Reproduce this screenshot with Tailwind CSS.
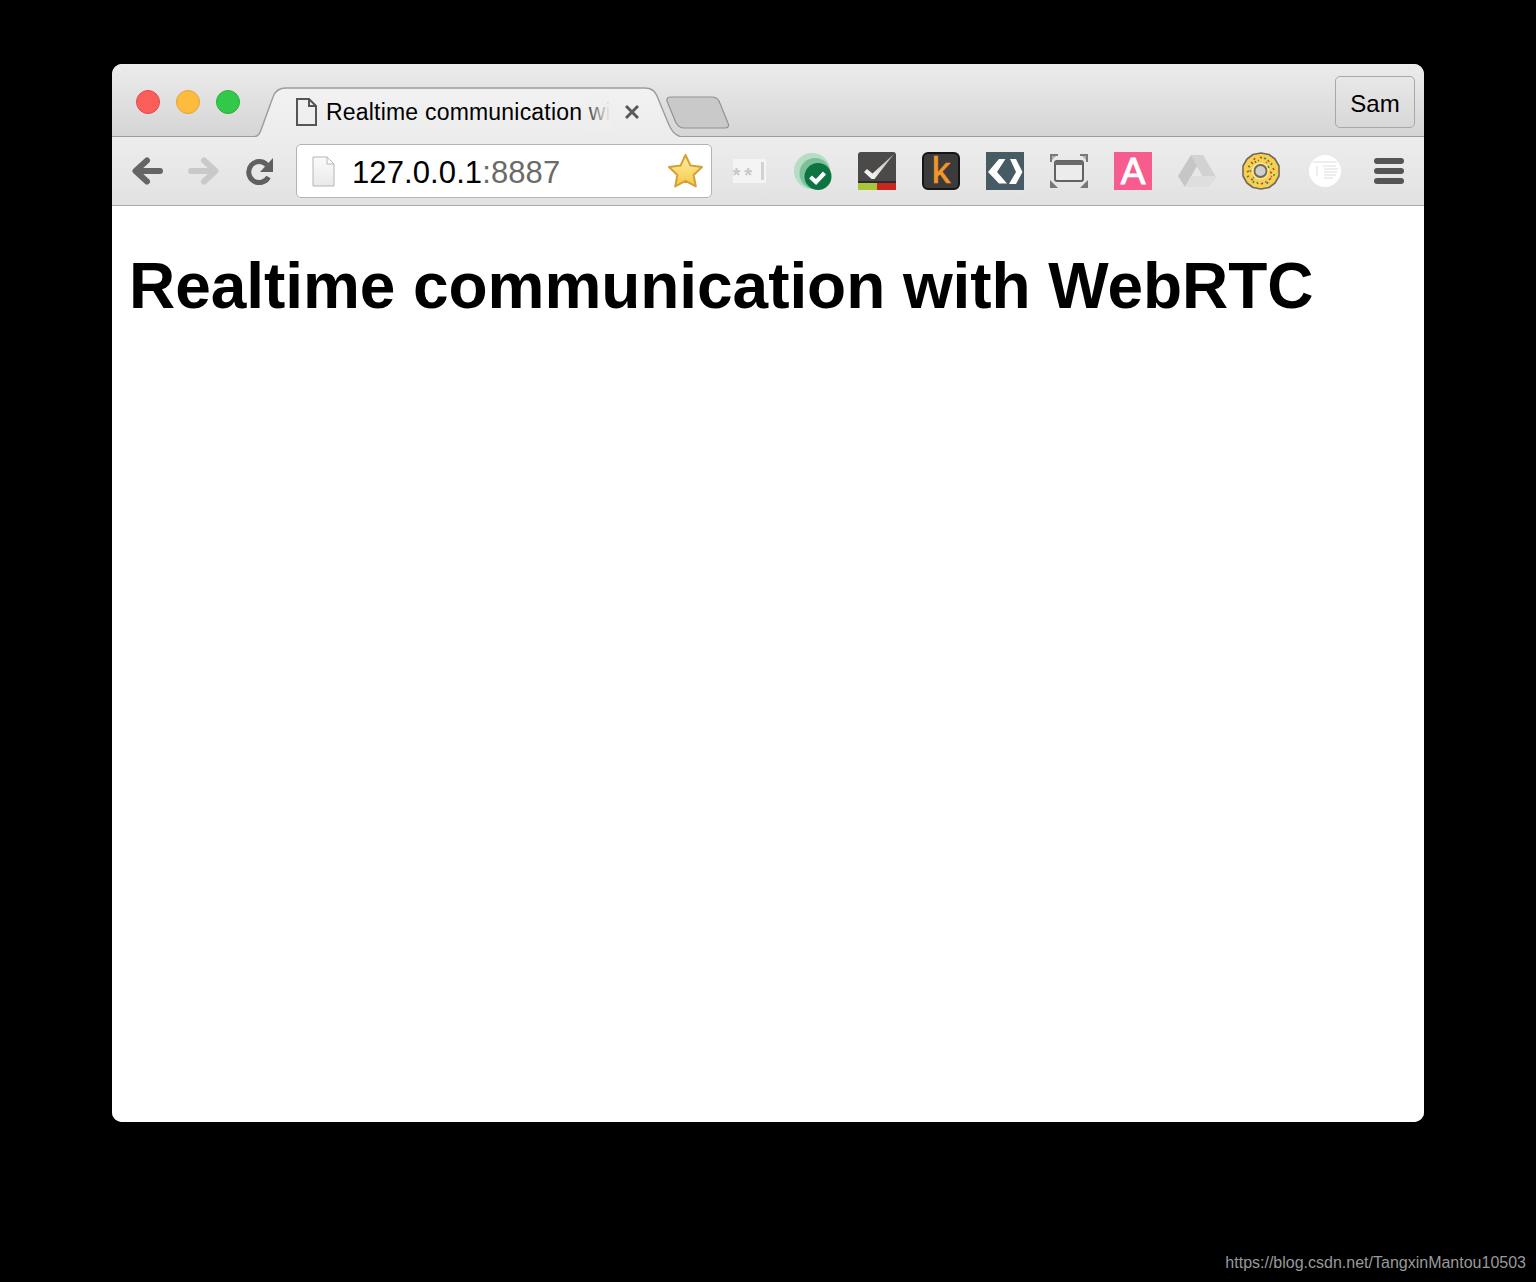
<!DOCTYPE html>
<html lang="en">
<head>
    <meta charset="UTF-8">
    <title>Realtime communication with WebRTC</title>
    <script src="https://cdn.jsdelivr.net/npm/@tailwindcss/browser@4"></script>
</head>
<body class="bg-black h-[1282px] overflow-hidden font-['Liberation_Sans',sans-serif]">
    <div class="pt-[64px] pl-[112px] h-[1251px]">
        <div class="w-[1312px] h-[1058px] bg-white rounded-[10px] overflow-hidden flex flex-col">

            <!-- Tab strip -->
            <div class="h-[73px] shrink-0 flex items-start border-b border-[#9c9c9c] bg-linear-to-b from-[#ececec] to-[#d5d5d5]">
                <div class="flex gap-[16px] pl-[24px] pt-[26px]">
                    <span class="w-[24px] h-[24px] rounded-full bg-[#fc5f5a] border border-[#e5484a]"></span>
                    <span class="w-[24px] h-[24px] rounded-full bg-[#fdbc3e] border border-[#e3a52f]"></span>
                    <span class="w-[24px] h-[24px] rounded-full bg-[#33c948] border border-[#2cae3d]"></span>
                </div>
                <div class="relative w-[425px] h-[50px] ml-[15px] mt-[23px] shrink-0">
                    <svg class="absolute inset-0" width="425" height="50" viewBox="0 0 425 50">
                        <defs>
                            <linearGradient id="tabFill" x1="0" y1="0" x2="0" y2="1">
                                <stop offset="0" stop-color="#f2f2f2"/>
                                <stop offset="1" stop-color="#ececec"/>
                            </linearGradient>
                        </defs>
                        <path d="M0 50 C4 49 5 46 6 43 L18 10 C20 4 24 1 31 1 L390 1 C396 1 400 4 402 9 L414 38 C417 45 420 48 425 49 L425 50 Z" fill="url(#tabFill)"/>
                        <path d="M0 49.5 C4 49 5 46 6 43 L18 10 C20 4 24 1 31 1 L390 1 C396 1 400 4 402 9 L414 38 C417 45 420 48 425 49.5" fill="none" stroke="#9c9c9c" stroke-width="1.4"/>
                    </svg>
                    <div class="relative flex items-center h-full pl-[41px]">
                        <svg class="shrink-0" width="21" height="28" viewBox="0 0 21 28" fill="none" stroke="#555" stroke-width="2">
                            <path d="M1 1 H13 L20 8 V27 H1 Z M13 1 V8 H20"/>
                        </svg>
                        <div class="relative w-[284px] ml-[9px] whitespace-nowrap text-[23px] tracking-[0.2px] text-black">
                            Realtime communication wi
                            <span class="absolute inset-y-0 right-0 w-[30px] bg-linear-to-r from-[#efefef]/0 to-[#efefef]"></span>
                        </div>
                        <svg class="shrink-0 ml-[15px]" width="14" height="14" viewBox="0 0 14 14" stroke="#5a5a5a" stroke-width="3">
                            <path d="M1 1 L13 13 M13 1 L1 13"/>
                        </svg>
                    </div>
                </div>
                <svg class="relative shrink-0 -ml-[14px] mt-[32px]" width="64" height="33" viewBox="0 0 64 33">
                    <path d="M1 5 C0.5 2 2 1 5 1 L46 1 C50 1 52 3 53 5 L62 27 C63.5 30 62 32 59 32 L18 32 C14 32 12 30 10 27 Z" fill="#c9c9c9" stroke="#929292" stroke-width="1.2"/>
                </svg>
                <div class="ml-auto mr-[9px] mt-[12px] w-[80px] h-[52px] pt-[4px] rounded-[5px] border border-[#a8a8a8] flex items-center justify-center text-[24px] text-black">Sam</div>
            </div>

            <!-- Toolbar -->
            <div class="h-[69px] shrink-0 flex items-center border-b border-[#a8a8a8] bg-linear-to-b from-[#ededed] to-[#e2e2e2]">
                <svg class="ml-[20px] shrink-0" width="32" height="28" viewBox="0 0 32 28" fill="none" stroke="#656565" stroke-width="6" stroke-linecap="round" stroke-linejoin="round">
                    <path d="M28 14 H4 M15 3.500 L3.500 14 L15 24.500"/>
                </svg>
                <svg class="ml-[23px] shrink-0" width="32" height="28" viewBox="0 0 32 28" fill="none" stroke="#c9c9c9" stroke-width="6" stroke-linecap="round" stroke-linejoin="round">
                    <path d="M4 14 H28 M17 3.500 L28.500 14 L17 24.500"/>
                </svg>
                <svg class="ml-[27px] shrink-0" width="28" height="28" viewBox="0 0 28 28" fill="none">
                    <path d="M22.500 20 A10.500 10.500 0 1 1 21 8" stroke="#606060" stroke-width="5"/>
                    <path d="M27 1 V15 H14 Z" fill="#606060"/>
                </svg>
                <div class="ml-[22px] w-[416px] h-[54px] shrink-0 bg-white rounded-[5px] border border-[#b4b4b4] flex items-center pl-[15px]">
                    <svg class="shrink-0" width="23" height="31" viewBox="0 0 23 31">
                        <defs>
                            <linearGradient id="pageFill" x1="0" y1="0" x2="0" y2="1">
                                <stop offset="0" stop-color="#fbfbfb"/>
                                <stop offset="1" stop-color="#e9e9e9"/>
                            </linearGradient>
                        </defs>
                        <path d="M1 1 H15 L22 8 V30 H1 Z" fill="url(#pageFill)" stroke="#b5b5b5" stroke-width="1"/>
                        <path d="M15 1 V8 H22 Z" fill="#fff" stroke="#b5b5b5" stroke-width="1"/>
                    </svg>
                    <div class="ml-[17px] pt-[4px] text-[31px] tracking-[0.1px] text-black">127.0.0.1<span class="text-[#6a6a6a]">:8887</span></div>
                    <svg class="ml-auto mr-[7px] shrink-0" width="37" height="36" viewBox="0 0 37 36">
                        <defs>
                            <linearGradient id="starFill" x1="0" y1="0" x2="0" y2="1">
                                <stop offset="0" stop-color="#fdf0a4"/>
                                <stop offset="1" stop-color="#f8c845"/>
                            </linearGradient>
                        </defs>
                        <path d="M18.500 2 L23.500 12.600 L35 14 L26.600 22 L28.800 33.500 L18.500 27.800 L8.200 33.500 L10.400 22 L2 14 L13.500 12.600 Z" fill="url(#starFill)" stroke="#d69f38" stroke-width="2" stroke-linejoin="round"/>
                    </svg>
                </div>

                <div class="ml-[18px] flex items-center gap-[26px]">
                    <!-- password ext -->
                    <div class="w-[38px] h-[38px] flex items-center justify-center">
                        <div class="relative w-[33px] h-[24px] bg-[#f4f4f4]">
                            <span class="absolute left-0 top-[6px] text-[#c8c8c8] text-[20px] leading-[20px] tracking-[4px] font-bold whitespace-nowrap">**</span>
                            <span class="absolute right-[2px] top-[3px] w-[3px] h-[18px] bg-[#d2d2d2]"></span>
                        </div>
                    </div>
                    <!-- green check -->
                    <svg width="38" height="38" viewBox="0 0 38 38">
                        <circle cx="18" cy="19" r="18" fill="#b5dcc5"/>
                        <circle cx="21" cy="21.500" r="15.500" fill="#7cc09a"/>
                        <circle cx="24" cy="24.500" r="13.500" fill="#0c7440"/>
                        <path d="M16.500 25 L22 30 L30.500 21" fill="none" stroke="#fff" stroke-width="4.200"/>
                    </svg>
                    <!-- checkmark tile -->
                    <svg width="38" height="38" viewBox="0 0 38 38">
                        <defs>
                            <linearGradient id="checkFill" x1="0" y1="1" x2="1" y2="0">
                                <stop offset="0" stop-color="#ffffff"/>
                                <stop offset="1" stop-color="#b5b5b5"/>
                            </linearGradient>
                        </defs>
                        <rect width="38" height="38" rx="3" fill="#4c4a49"/>
                        <rect y="29" width="38" height="2" fill="#2e2a33"/>
                        <rect y="31" width="19" height="7" fill="#a8c63a"/>
                        <rect x="19" y="31" width="19" height="7" fill="#c8261f"/>
                        <path d="M6 20 L9 17 L14.500 21.500 L36 2 L16.500 27 L13.500 27 Z" fill="url(#checkFill)"/>
                    </svg>
                    <!-- k tile -->
                    <div class="w-[38px] h-[38px] rounded-[6px] bg-[#3b3b3b] border-2 border-[#161616] flex items-center justify-center text-[#f0962a] text-[37px] leading-none pb-[2px] [-webkit-text-stroke:0.7px_#f0962a]">k</div>
                    <!-- diamond tile -->
                    <svg width="38" height="38" viewBox="0 0 38 38">
                        <rect width="38" height="38" fill="#475b65"/>
                        <path d="M13 7 H19.500 L11 20 L21 31.500 H13 L2 20 Z M24 7 H30 L36.500 20 L30 32 H23 L30 20 Z" fill="#fff"/>
                    </svg>
                    <!-- screenshot frame -->
                    <svg width="38" height="38" viewBox="0 0 38 38">
                        <path d="M0 2 H8 L0 10 Z M38 2 H30 L38 10 Z" fill="#b0b0b0"/>
                        <path d="M0 2 H8 V4 H2 V10 H0 Z M38 2 H30 V4 H36 V10 H38 Z" fill="#7a7a7a"/>
                        <path d="M0 36 H8 L0 28 Z M38 36 H30 L38 28 Z" fill="#777"/>
                        <rect x="5" y="9" width="28" height="20" rx="2" fill="#ececec" stroke="#626262" stroke-width="2"/>
                        <rect x="5" y="9" width="28" height="4" fill="#6a6a6a"/>
                    </svg>
                    <!-- pink A -->
                    <div class="w-[38px] h-[38px] bg-[#f75c8f] flex items-center justify-center text-white text-[37px] leading-none [-webkit-text-stroke:1px_white]">A</div>
                    <!-- drive -->
                    <svg width="38" height="38" viewBox="0 0 38 38">
                        <path d="M13 3 H25 L38 25 L30 35 L13 3 Z" fill="#d2d2d2"/>
                        <path d="M13 3 L19 14 L7 35 L0 24 Z" fill="#c6c6c6"/>
                        <path d="M13 24 H38 L30 35 H7 Z" fill="#dedede"/>
                    </svg>
                    <!-- donut -->
                    <svg width="38" height="38" viewBox="0 0 38 38">
                        <path d="M19 1 L27 2.500 L33 7 L37 14 L37 24 L33 31 L27 35.500 L19 37 L11 35.500 L5 31 L1 24 L1 14 L5 7 L11 2.500 Z" fill="#f6d04e" stroke="#75685a" stroke-width="1.600" stroke-linejoin="round"/>
                        <circle cx="18.500" cy="19" r="6" fill="#cfcfcf" stroke="#6f6a5a" stroke-width="1.800"/>
                        <circle cx="18.500" cy="19" r="8" fill="none" stroke="#fbe9a8" stroke-width="1.200"/>
                        <path d="M9 10 l2 2 M18 5 l2 1 M26 8 l1 2 M31 16 l1 2 M5 20 l2 -1 M9 27 l2 1 M19 32 l2 -1 M27 28 l2 -2 M28 20 l2 1 M13 6 l-1 2" stroke="#c44a2e" stroke-width="1.600"/>
                        <path d="M13 9 l1 2 M22 6 l2 1 M30 11 l-1 2 M6 14 l2 1 M5 25 l2 -1 M15 30 l1 2 M25 32 l1 -2 M33 23 l-2 0 M26 14 l1 2 M11 31 l1 -2" stroke="#3e8a6a" stroke-width="1.600"/>
                        <path d="M8 18 l1 2 M23 30 l2 0 M16 8 l1 1 M29 25 l1 -1 M12 25 l-1 1 M24 11 l1 -1" stroke="#5a7fa6" stroke-width="1.400"/>
                    </svg>
                    <!-- white reader circle -->
                    <svg width="38" height="38" viewBox="0 0 38 38">
                        <circle cx="19" cy="19" r="16" fill="#fff"/>
                        <path d="M7 10 H31 M11 14 V24 M17 14 H30 M18 17 H32 M18 20 H31 M18 23 H30 M18 26 H27" stroke="#d4d4d4" stroke-width="0.800"/>
                    </svg>
                    <!-- menu -->
                    <div class="w-[38px] h-[38px] flex flex-col items-center justify-center gap-[4px]">
                        <span class="w-[30px] h-[6px] rounded-full bg-[#555]"></span>
                        <span class="w-[30px] h-[6px] rounded-full bg-[#555]"></span>
                        <span class="w-[30px] h-[6px] rounded-full bg-[#555]"></span>
                    </div>
                </div>
            </div>

            <!-- Page -->
            <div class="flex-1 bg-white pl-[17px] pt-[43px]">
                <h1 class="text-[64px] leading-[74px] font-bold text-black tracking-[-0.06px] whitespace-nowrap">Realtime communication with WebRTC</h1>
            </div>
        </div>
    </div>
    <div class="pr-[10px] text-right text-[#999] text-[16px] leading-[24px]">https://blog.csdn.net/TangxinMantou10503</div>
</body>
</html>
